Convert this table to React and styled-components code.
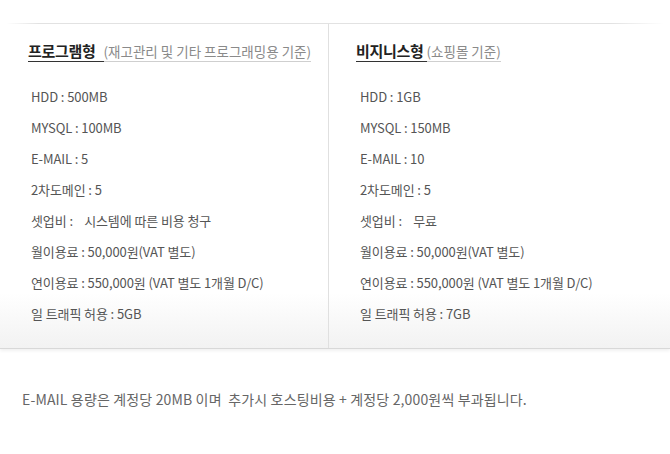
import styled, { createGlobalStyle } from "styled-components";

const GlobalStyle = createGlobalStyle`
    body {
        margin: 0;
        background: #fff;
        font-family: "Noto Sans CJK KR", "Noto Sans", sans-serif;
    }
`;

const Page = styled.div`
    width: 670px;
    height: 454px;
    padding-top: 23px;
    box-sizing: border-box;
`;

const Panel = styled.div`
    position: relative;
    display: grid;
    grid-template-columns: 329px 1fr;
    height: 325px;
    background: linear-gradient(#fff 0, #fff 270px, #f2f2f2 100%);
    border-bottom: 1px solid #d8d8d8;
    box-shadow: 0 2px 3px rgba(0, 0, 0, 0.06);

    &::before {
        content: "";
        position: absolute;
        top: 0;
        left: 6px;
        right: 6px;
        height: 1px;
        background: linear-gradient(
            to right,
            rgba(220, 220, 220, 0),
            #e2e2e2 5%,
            #e2e2e2 92%,
            rgba(220, 220, 220, 0)
        );
    }
`;

const Column = styled.div`
    padding: 15px 0 0 ${(p) => p.$left}px;
    border-right: ${(p) => (p.$divider ? "1px solid #e0e0e0" : "none")};
`;

const Heading = styled.div`
    display: inline-flex;
    align-items: baseline;
    border-bottom: 1px solid #cfcfcf;
    line-height: 20px;
`;

const Title = styled.span`
    font-size: 15px;
    font-weight: 700;
    color: #222;
    letter-spacing: -0.3px;
    border-bottom: 1px solid #333;
    margin-bottom: -1px;
    padding-right: ${(p) => p.$gap}px;
`;

const Sub = styled.span`
    font-size: 13.5px;
    color: #8a8a8a;
`;

const List = styled.ul`
    list-style: none;
    margin: 19px 0 0 ${(p) => p.$indent}px;
    padding: 0;
`;

const Item = styled.li`
    font-size: 13px;
    line-height: 31px;
    height: 31px;
    color: #555;
    letter-spacing: -0.1px;
    white-space: pre;
`;

const Note = styled.p`
    margin: 40px 0 0 22px;
    font-size: 14px;
    color: #666;
    letter-spacing: 0.15px;
    white-space: pre;
`;

const plans = [
    {
        title: "프로그램형",
        sub: "(재고관리 및 기타 프로그래밍용 기준)",
        gap: 8,
        left: 28,
        indent: 3,
        items: [
            "HDD : 500MB",
            "MYSQL : 100MB",
            "E-MAIL : 5",
            "2차도메인 : 5",
            "셋업비 :    시스템에 따른 비용 청구",
            "월이용료 : 50,000원(VAT 별도)",
            "연이용료 : 550,000원 (VAT 별도 1개월 D/C)",
            "일 트래픽 허용 : 5GB",
        ],
    },
    {
        title: "비지니스형",
        sub: "(쇼핑몰 기준)",
        gap: 3,
        left: 27,
        indent: 4,
        items: [
            "HDD : 1GB",
            "MYSQL : 150MB",
            "E-MAIL : 10",
            "2차도메인 : 5",
            "셋업비 :    무료",
            "월이용료 : 50,000원(VAT 별도)",
            "연이용료 : 550,000원 (VAT 별도 1개월 D/C)",
            "일 트래픽 허용 : 7GB",
        ],
    },
];

const App = () => {
    return (
        <Page>
            <GlobalStyle />
            <Panel>
                {plans.map((plan, i) => (
                    <Column key={plan.title} $left={plan.left} $divider={i === 0}>
                        <Heading>
                            <Title $gap={plan.gap}>{plan.title}</Title>
                            <Sub>{plan.sub}</Sub>
                        </Heading>
                        <List $indent={plan.indent}>
                            {plan.items.map((item) => (
                                <Item key={item}>{item}</Item>
                            ))}
                        </List>
                    </Column>
                ))}
            </Panel>
            <Note>E-MAIL 용량은 계정당 20MB 이며  추가시 호스팅비용 + 계정당 2,000원씩 부과됩니다.</Note>
        </Page>
    );
};

export default App;
